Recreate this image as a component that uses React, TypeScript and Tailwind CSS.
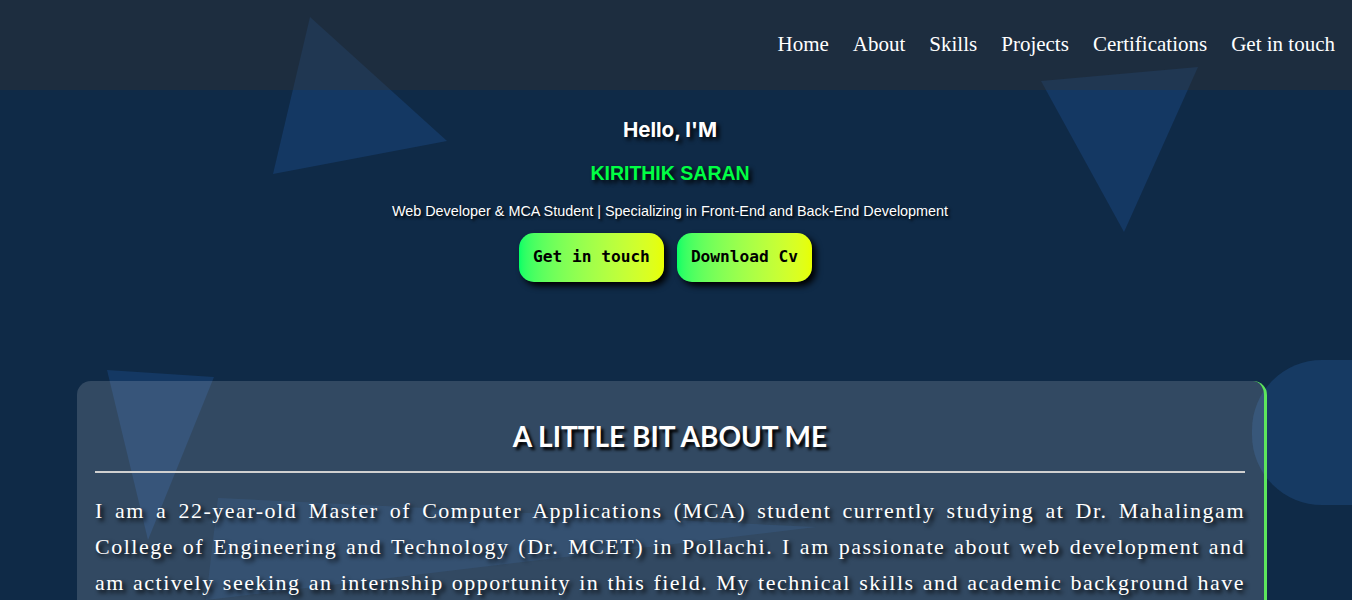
import React from "react";

const navLinks = ["Home", "About", "Skills", "Projects", "Certifications", "Get in touch"];

function Shapes() {
	// floating background triangles, sit under everything
	return (
		<svg className="absolute inset-0 z-0 pointer-events-none" width="1352" height="600" viewBox="0 0 1352 600">
			<polygon points="310,17 447,141 273,174" fill="#1a4a85" fillOpacity="0.45" />
			<polygon points="1041,81 1198,67 1124,232" fill="#1a4a85" fillOpacity="0.45" />
			<polygon points="107,370 214,377 148,540" fill="#1a4a85" fillOpacity="0.45" />
			<polygon points="218,498 816,527 206,600" fill="#1a4a85" fillOpacity="0.3" />
		</svg>
	);
}

function Header() {
	return (
		<header className="relative z-10 h-[90px] bg-[rgba(60,52,46,0.32)] flex items-center justify-end pr-[17px] pb-[2px]">
			<nav className="flex gap-[24px] font-['Liberation_Serif',serif] text-[21px] text-white">
				{navLinks.map((link) => (
					<a key={link} href="#" className="leading-none">
						{link}
					</a>
				))}
			</nav>
		</header>
	);
}

function Hero() {
	return (
		<section className="relative z-10 flex flex-col items-center pr-[12px] text-white">
			<h1 className="mt-[25px] leading-[30px] text-[20.5px] font-bold font-['Inter',sans-serif] [text-shadow:3px_3px_4px_#000]">
				Hello, I'M
			</h1>
			<h2 className="mt-[13px] leading-[30px] text-[19.5px] font-bold text-[#00ff44] font-['Liberation_Sans',sans-serif] [text-shadow:3px_3px_4px_#000]">
				KIRITHIK SARAN
			</h2>
			<p className="mt-[13px] leading-[20px] text-[14.4px] font-['Liberation_Sans',sans-serif] [text-shadow:2px_2px_3px_#000]">
				Web Developer &amp; MCA Student | Specializing in Front-End and Back-End Development
			</p>
			<div className="mt-[12px] mr-[9px] flex gap-[13px]">
				<button className="h-[49px] px-[14px] rounded-[15px] bg-gradient-to-r from-[#00ff66] to-[#e8ff00] text-black font-semibold font-['DejaVu_Sans_Mono',monospace] text-[16.2px] shadow-[4px_4px_6px_#000]">
					Get in touch
				</button>
				<button className="h-[49px] px-[14px] rounded-[15px] bg-gradient-to-r from-[#00ff66] to-[#e8ff00] text-black font-semibold font-['DejaVu_Sans_Mono',monospace] text-[16.2px] shadow-[4px_4px_6px_#000]">
					Download Cv
				</button>
			</div>
		</section>
	);
}

function About() {
	return (
		<section className="relative mt-[99px] px-[77px]">
			<div className="absolute left-[1252px] top-[-21px] w-[220px] h-[145px] rounded-[70px] bg-[#163a63] z-0" />
			<div className="relative z-10 w-[1190px] rounded-[14px] border-r-[3px] border-[#5ce65c] bg-[rgba(255,255,255,0.15)] pt-[20px] pl-[18px] pr-[19px] pb-[40px]">
				<h2 className="text-center text-white text-[28px] leading-[70px] font-bold font-['Lato',sans-serif] [text-shadow:3px_3px_3px_#000]">
					A LITTLE BIT ABOUT ME
				</h2>
				<hr className="border-0 h-[2px] bg-[#d0d0d0]" />
				<p className="mt-[20px] text-white text-justify text-[22px] leading-[36px] tracking-[1.5px] font-['Liberation_Serif',serif] [text-shadow:3px_3px_4px_#000]">
					I am a 22-year-old Master of Computer Applications (MCA) student currently studying at Dr. Mahalingam College of Engineering and Technology (Dr. MCET) in Pollachi. I am passionate about web development and am actively seeking an internship opportunity in this field. My technical skills and academic background have prepared me to contribute to real-world projects and keep growing as a developer.
				</p>
			</div>
		</section>
	);
}

export default function App() {
	return (
		<div className="relative min-h-[600px] overflow-hidden bg-[#0f2a47]">
			<Shapes />
			<Header />
			<Hero />
			<About />
		</div>
	);
}
